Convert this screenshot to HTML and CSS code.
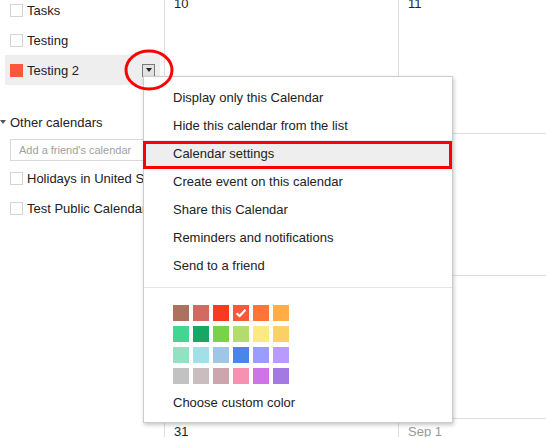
FILE: index.html
```html
<!DOCTYPE html>
<html>
<head>
<meta charset="utf-8">
<link rel="stylesheet" href="styles.css">
</head>
<body>
<div class="page">
  <aside class="sidebar">
    <div class="cal-row"><span class="chk"></span><span class="cal-name">Tasks</span></div>
    <div class="cal-row"><span class="chk"></span><span class="cal-name">Testing</span></div>
    <div class="cal-row active"><span class="chk filled"></span><span class="cal-name">Testing 2</span><span class="menu-btn"><span class="tri"></span></span></div>
    <div class="section-head"><span class="head-tri"></span><span>Other calendars</span></div>
    <input class="friend" type="text" placeholder="Add a friend's calendar">
    <div class="cal-row"><span class="chk"></span><span class="cal-name">Holidays in United States</span></div>
    <div class="cal-row"><span class="chk"></span><span class="cal-name">Test Public Calendar</span></div>
  </aside>
  <main class="month">
    <div class="cell"><span class="day">10</span></div>
    <div class="cell"><span class="day">11</span></div>
    <div class="cell"><span class="day">17</span></div>
    <div class="cell"><span class="day">18</span></div>
    <div class="cell"><span class="day">24</span></div>
    <div class="cell"><span class="day">25</span></div>
    <div class="cell"><span class="day">31</span></div>
    <div class="cell"><span class="day other">Sep 1</span></div>
  </main>
</div>

<div class="menu">
  <div class="item">Display only this Calendar</div>
  <div class="item">Hide this calendar from the list</div>
  <div class="item hl">Calendar settings</div>
  <div class="item">Create event on this calendar</div>
  <div class="item">Share this Calendar</div>
  <div class="item">Reminders and notifications</div>
  <div class="item">Send to a friend</div>
  <div class="sep"></div>
  <div class="palette">
    <span class="sw c1"></span><span class="sw c2"></span><span class="sw c3"></span><span class="sw c4 checked"><svg viewBox="0 0 16 16" width="16" height="16"><path d="M3.5 8.2 L6.6 11 L12.5 4.8" fill="none" stroke="#fff" stroke-width="2.2"/></svg></span><span class="sw c5"></span><span class="sw c6"></span>
    <span class="sw c7"></span><span class="sw c8"></span><span class="sw c9"></span><span class="sw c10"></span><span class="sw c11"></span><span class="sw c12"></span>
    <span class="sw c13"></span><span class="sw c14"></span><span class="sw c15"></span><span class="sw c16"></span><span class="sw c17"></span><span class="sw c18"></span>
    <span class="sw c19"></span><span class="sw c20"></span><span class="sw c21"></span><span class="sw c22"></span><span class="sw c23"></span><span class="sw c24"></span>
  </div>
  <div class="item custom">Choose custom color</div>
</div>

<div class="annot-rect"></div>
<svg class="annot-ring" viewBox="0 0 50 42" width="50" height="42"><ellipse cx="25" cy="21" rx="23" ry="19" fill="none" stroke="#f00" stroke-width="3"/></svg>
</body>
</html>
```

FILE: styles.css
```css
* { box-sizing: border-box; }
html, body { margin: 0; padding: 0; }
body {
  width: 546px;
  height: 437px;
  overflow: hidden;
  position: relative;
  background: #fff;
  font-family: "Liberation Sans", Arial, sans-serif;
  font-size: 13px;
  color: #222;
}
.page { display: flex; height: 437px; overflow: hidden; }

.sidebar {
  width: 164px;
  flex: none;
  margin-top: -5px;
  display: flex;
  flex-direction: column;
}
.cal-row {
  height: 30px;
  flex: none;
  display: flex;
  align-items: center;
  margin: 0 4px 0 5px;
  padding-left: 5px;
  white-space: nowrap;
  overflow: hidden;
}
.cal-row.active { background: #eee; }
.chk {
  width: 13px;
  height: 13px;
  flex: none;
  border: 1px solid #d4d4d4;
  background: #fff;
  margin-right: 4px;
}
.chk.filled { background: #fa573c; border-color: #fa573c; }
.cal-name { color: #222; }
.menu-btn {
  margin-left: auto;
  margin-right: 5px;
  width: 13px;
  height: 13px;
  flex: none;
  border: 1px solid #7a7a7a;
  background: #e2e2e2;
  display: flex;
  align-items: center;
  justify-content: center;
}
.tri {
  width: 0; height: 0;
  border-left: 3.5px solid transparent;
  border-right: 3.5px solid transparent;
  border-top: 4px solid #222;
}
.section-head {
  margin-top: 27px;
  height: 20px;
  flex: none;
  display: flex;
  align-items: center;
  white-space: nowrap;
}
.head-tri {
  width: 0; height: 0;
  border-left: 3px solid transparent;
  border-right: 3px solid transparent;
  border-top: 4px solid #555;
  margin-right: 4px;
}
.friend {
  margin: 7px 4px 2px 10px;
  height: 22px;
  width: 150px;
  flex: none;
  border: 1px solid #d9d9d9;
  padding: 0 0 0 8px;
  font-family: "Liberation Sans", Arial, sans-serif;
  font-size: 11px;
  color: #222;
  outline: none;
}
.friend::placeholder { color: #a0a0a0; }

.month {
  flex: 1;
  margin-top: -9px;
  display: grid;
  grid-template-columns: 234px 1fr;
  grid-template-rows: repeat(4, 142.5px);
  overflow: hidden;
}
.cell {
  border-left: 1px solid #ddd;
  border-bottom: 1px solid #ddd;
  padding: 5px 0 0 9px;
}
.day { color: #222; }
.day.other { color: #999; }

.menu {
  position: absolute;
  left: 143px;
  top: 76px;
  width: 310px;
  border: 1px solid #ccc;
  background: #fff;
  box-shadow: 1px 2px 4px rgba(0,0,0,0.22);
  padding: 7px 0 5px;
}
.item {
  height: 28px;
  line-height: 28px;
  padding-left: 29px;
  white-space: nowrap;
  color: #222;
}
.item.hl { background: #eee; }
.sep { margin-top: 7px; height: 1px; background: #e5e5e5; }
.palette {
  margin: 17px 0 0 29px;
  display: grid;
  grid-template-columns: repeat(6, 16px);
  grid-auto-rows: 16px;
  column-gap: 4px;
  row-gap: 5px;
}
.sw { display: block; width: 16px; height: 16px; }
.sw svg { display: block; }
.item.custom { margin-top: 5px; }
.c1 { background: #ac725e; } .c2 { background: #d06b64; } .c3 { background: #f83a22; }
.c4 { background: #fa573c; } .c5 { background: #ff7537; } .c6 { background: #ffad46; }
.c7 { background: #42d692; } .c8 { background: #16a765; } .c9 { background: #7bd148; }
.c10 { background: #b3dc6c; } .c11 { background: #fbe983; } .c12 { background: #fad165; }
.c13 { background: #92e1c0; } .c14 { background: #9fe1e7; } .c15 { background: #9fc6e7; }
.c16 { background: #4986e7; } .c17 { background: #9a9cff; } .c18 { background: #b99aff; }
.c19 { background: #c2c2c2; } .c20 { background: #cabdbf; } .c21 { background: #cca6ac; }
.c22 { background: #f691b2; } .c23 { background: #cd74e6; } .c24 { background: #a47ae2; }

.annot-rect {
  position: absolute;
  left: 143px;
  top: 141px;
  width: 309px;
  height: 28px;
  border: 3px solid #f00;
}
.annot-ring {
  position: absolute;
  left: 124px;
  top: 49px;
}
```
